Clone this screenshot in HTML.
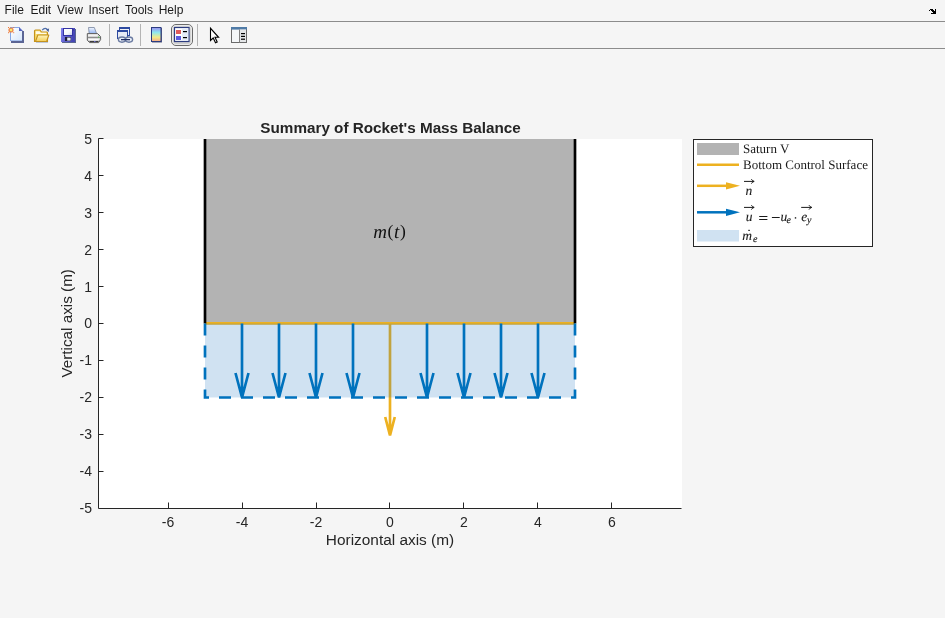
<!DOCTYPE html>
<html><head><meta charset="utf-8">
<style>
html,body{margin:0;padding:0;width:945px;height:618px;overflow:hidden;background:#f5f5f5;}
svg{display:block;will-change:transform;}
.sans{font-family:"Liberation Sans",sans-serif;}
.serif{font-family:"Liberation Serif",serif;text-rendering:geometricPrecision;}
</style></head>
<body>
<svg width="945" height="618" viewBox="0 0 945 618">
<rect x="0" y="0" width="945" height="618" fill="#f5f5f5"/>
<!-- menu -->
<g class="sans" font-size="12" fill="#1a1a1a">
<text x="4.6" y="14">File</text>
<text x="30.5" y="14">Edit</text>
<text x="57" y="14">View</text>
<text x="88.5" y="14">Insert</text>
<text x="125" y="14">Tools</text>
<text x="158.7" y="14">Help</text>
</g>
<rect x="0" y="21" width="945" height="1" fill="#8c8c8c"/>
<rect x="0" y="48" width="945" height="1" fill="#8c8c8c"/>
<!-- toolbar separators -->
<rect x="109" y="24" width="1" height="22" fill="#b4b4b4"/>
<rect x="140" y="24" width="1" height="22" fill="#b4b4b4"/>
<rect x="197" y="24" width="1" height="22" fill="#b4b4b4"/>


<!-- toolbar icons -->
<defs>
<linearGradient id="pg" x1="0" y1="0" x2="1" y2="1"><stop offset="0" stop-color="#ffffff"/><stop offset="1" stop-color="#d6e6fb"/></linearGradient>
<linearGradient id="fold" x1="0" y1="0" x2="0" y2="1"><stop offset="0" stop-color="#fff6c0"/><stop offset="1" stop-color="#f5cf58"/></linearGradient>
<linearGradient id="cb" x1="0" y1="0" x2="0" y2="1"><stop offset="0" stop-color="#9a8cf0"/><stop offset="0.35" stop-color="#8ee8f0"/><stop offset="0.7" stop-color="#f4ec88"/><stop offset="1" stop-color="#f6a88a"/></linearGradient>
<linearGradient id="btn" x1="0" y1="0" x2="0" y2="1"><stop offset="0" stop-color="#dadada"/><stop offset="1" stop-color="#cdcdcd"/></linearGradient>
<linearGradient id="prn" x1="0" y1="0" x2="0" y2="1"><stop offset="0" stop-color="#f4f4f4"/><stop offset="1" stop-color="#9a9a9a"/></linearGradient>
<linearGradient id="flp" x1="0" y1="0" x2="1" y2="0.3"><stop offset="0" stop-color="#8080ee"/><stop offset="1" stop-color="#4646b4"/></linearGradient>
<linearGradient id="lbl" x1="0" y1="0" x2="1" y2="1"><stop offset="0" stop-color="#ffffff"/><stop offset="0.6" stop-color="#f4f6fb"/><stop offset="1" stop-color="#c8d0e8"/></linearGradient>
<linearGradient id="ppr" x1="0" y1="0" x2="0" y2="1"><stop offset="0" stop-color="#f4f8ff"/><stop offset="1" stop-color="#90b2f0"/></linearGradient>
</defs>
<g id="ic-new">
<rect x="11" y="28" width="11" height="13" fill="url(#pg)"/>
<rect x="10" y="27" width="1" height="14" fill="#86a6e4"/>
<rect x="10" y="27" width="9.5" height="1" fill="#86a6e4"/>
<rect x="11" y="40" width="11" height="1" fill="#a9c3f0"/>
<path d="M19,27L23,31H19Z" fill="#5565c0"/>
<rect x="22" y="31" width="2" height="12" fill="#5b6594"/>
<rect x="11" y="41" width="13" height="2" fill="#5b6594"/>
<circle cx="11" cy="30" r="2.6" fill="#f08040" opacity="0.9"/>
<circle cx="11" cy="30" r="1.2" fill="#f6ee70"/>
<g fill="#ec7a3c"><rect x="8" y="27" width="1" height="1"/><rect x="13.2" y="27" width="1" height="1"/><rect x="8" y="32.2" width="1" height="1"/><rect x="13.2" y="32.2" width="1" height="1"/></g>
</g>
<g id="ic-open">
<rect x="36" y="42" width="12" height="1" fill="#bcc6d8"/>
<path d="M34.5,41.5V31Q34.5,30 35.5,30H40L41.5,32H47Q47.5,32 47.5,33V41.5Z" fill="#f6da6c" stroke="#c4921c" stroke-width="1.1"/>
<path d="M35.8,31.2H39.6L40.6,32.8H46.4V34H35.8Z" fill="#fffbe8"/>
<path d="M35.5,41.5L37.8,35H48.8L46.6,41.5Z" fill="url(#fold)" stroke="#c4921c" stroke-width="1.1" stroke-linejoin="round"/>
<path d="M42.2,30.2Q44.6,27.2 47.2,29.2" fill="none" stroke="#4f6ea8" stroke-width="1.2"/>
<path d="M45.9,29.4L49.1,28.4L48.6,31.9Z" fill="#3f5c9c"/>
</g>
<g id="ic-save">
<rect x="62" y="29" width="14" height="14" fill="#5a6690"/>
<rect x="61" y="28" width="14" height="14" fill="url(#flp)"/>
<rect x="63" y="28" width="10" height="8" fill="#3434a4"/>
<rect x="64" y="29" width="8" height="6" fill="url(#lbl)"/>
<rect x="65" y="37" width="6" height="4" fill="#20203c"/>
<rect x="67.2" y="37.6" width="3.4" height="3" fill="#e6eaf6"/>
<rect x="73" y="29.5" width="1" height="1" fill="#30307a"/>
</g>
<g id="ic-print">
<path d="M88.5,27.5H94.3L96.6,33.6H89.2Z" fill="url(#ppr)" stroke="#76849e" stroke-width="0.8"/>
<path d="M87.3,33.6H97.6L100.6,36.6V39.6L98.6,42.6H89.6L87.3,40.2Z" fill="#d4d4d4" stroke="#5e5e5e" stroke-width="1"/>
<rect x="88.2" y="34.4" width="9.5" height="1.6" fill="#f2f2f2"/>
<rect x="88" y="37" width="12" height="1" fill="#8c8c8c"/>
<rect x="88.3" y="38.8" width="10.5" height="1.3" fill="#fbfbfb"/>
<rect x="89.5" y="41" width="9" height="1" fill="#3c3c3c"/>
<rect x="94" y="41" width="1.5" height="1" fill="#6a6ad0"/>
<rect x="98" y="36.5" width="1.2" height="1.2" fill="#52c452"/>
</g>
<g id="ic-link">
<rect x="119.5" y="27.5" width="10" height="8" fill="#f0f2f8" stroke="#2d4aa0" stroke-width="1"/>
<rect x="119" y="27" width="11" height="2" fill="#2d4aa0"/>
<rect x="117.5" y="30.5" width="10" height="8" fill="#e6eaf4" stroke="#2d4aa0" stroke-width="1"/>
<rect x="117" y="30" width="11" height="2" fill="#2d4aa0"/>
<ellipse cx="122" cy="39.6" rx="3.6" ry="2.6" fill="#e8eef8" stroke="#6a7aa0" stroke-width="1.4"/>
<ellipse cx="129" cy="39.6" rx="3.6" ry="2.6" fill="#e8eef8" stroke="#6a7aa0" stroke-width="1.4"/>
<rect x="121" y="39" width="9" height="1.3" fill="#1e2c60"/>
</g>
<g id="ic-cbar">
<rect x="152" y="28" width="10" height="14.5" fill="#5a6080"/>
<rect x="151.5" y="27.5" width="9.5" height="14" fill="url(#cb)" stroke="#2c3c80" stroke-width="1"/>
</g>
<g id="ic-legend">
<rect x="171.5" y="24.5" width="21" height="21" rx="4.5" fill="url(#btn)" stroke="#6a6a6a" stroke-width="1"/>
<rect x="172.5" y="25.5" width="19" height="19" rx="3.5" fill="none" stroke="#ebebeb" stroke-width="1"/>
<rect x="174.5" y="27.5" width="14.5" height="14" fill="#ffffff" stroke="#2c3c80" stroke-width="1.2"/>
<rect x="182" y="28.2" width="6.2" height="12.6" fill="#e6ecf8"/>
<rect x="176" y="30" width="5" height="4" fill="#e05a5a"/>
<rect x="176" y="36" width="5" height="4" fill="#5a5ae0"/>
<rect x="183" y="31" width="4" height="1.2" fill="#000"/>
<rect x="183" y="37" width="4" height="1.2" fill="#000"/>
</g>
<g id="ic-pointer">
<path d="M210.5,28.3V40.5L213.2,38L215.5,42.7L217.2,41.9L215,37.3H218.6Z" fill="#fff" stroke="#000" stroke-width="1.1" stroke-linejoin="miter"/>
</g>
<g id="ic-prop">
<rect x="231.5" y="27.5" width="15" height="15" fill="#f4f6f8" stroke="#6a6a6a" stroke-width="1"/>
<rect x="231" y="27" width="16" height="2.6" fill="#4f7aa6"/>
<rect x="239" y="29.5" width="1" height="13" fill="#808080"/>
<rect x="240" y="29.6" width="6" height="12.4" fill="#e4e6e8"/>
<rect x="241" y="33" width="4" height="1.2" fill="#000"/>
<rect x="241" y="35.8" width="4" height="1.2" fill="#000"/>
<rect x="241" y="38.6" width="4" height="1.2" fill="#000"/>
</g>
<g fill="#000"><rect x="930" y="9" width="1" height="1"/><rect x="931" y="9" width="1" height="1"/><rect x="932" y="9" width="1" height="1"/><rect x="935" y="9" width="1" height="1"/><rect x="929" y="10" width="1" height="1"/><rect x="931" y="10" width="1" height="1"/><rect x="932" y="10" width="1" height="1"/><rect x="933" y="10" width="1" height="1"/><rect x="935" y="10" width="1" height="1"/><rect x="932" y="11" width="1" height="1"/><rect x="933" y="11" width="1" height="1"/><rect x="934" y="11" width="1" height="1"/><rect x="935" y="11" width="1" height="1"/><rect x="933" y="12" width="1" height="1"/><rect x="934" y="12" width="1" height="1"/><rect x="935" y="12" width="1" height="1"/><rect x="931" y="13" width="1" height="1"/><rect x="932" y="13" width="1" height="1"/><rect x="933" y="13" width="1" height="1"/><rect x="934" y="13" width="1" height="1"/><rect x="935" y="13" width="1" height="1"/></g>

<!-- axes background -->
<rect x="99" y="139" width="583" height="369" fill="#ffffff"/>

<!-- plot content -->
<g id="plot">
<rect x="205" y="139" width="370" height="184.5" fill="#b3b3b3"/>
<line x1="205" y1="323.3" x2="575" y2="323.3" stroke="#edb120" stroke-width="2.67"/>
<line x1="205" y1="139" x2="205" y2="323.5" stroke="#000" stroke-width="2.67"/>
<line x1="575" y1="139" x2="575" y2="323.5" stroke="#000" stroke-width="2.67"/>
<path d="M390,323.5V435M385.2,417L390,435.3L394.8,417" stroke="#edb120" stroke-width="2.67" stroke-linejoin="bevel" fill="none"/>
<rect x="205" y="323.5" width="370" height="74" fill="#146ebe" fill-opacity="0.2"/>
<path d="M205,323.5 V397.5 H575 V323.5" fill="none" stroke="#0072bd" stroke-width="2.67" stroke-dasharray="12 10"/>
<g stroke="#0072bd" stroke-width="2.67" fill="none" stroke-linecap="butt" stroke-linejoin="bevel">
<path d="M242,323.5V397.5M235.5,373L242,397.5L248.5,373"/>
<path d="M279,323.5V397.5M272.5,373L279,397.5L285.5,373"/>
<path d="M316,323.5V397.5M309.5,373L316,397.5L322.5,373"/>
<path d="M353,323.5V397.5M346.5,373L353,397.5L359.5,373"/>
<path d="M427,323.5V397.5M420.5,373L427,397.5L433.5,373"/>
<path d="M464,323.5V397.5M457.5,373L464,397.5L470.5,373"/>
<path d="M501,323.5V397.5M494.5,373L501,397.5L507.5,373"/>
<path d="M538,323.5V397.5M531.5,373L538,397.5L544.5,373"/>
</g>
<text class="serif" font-size="19" y="238" fill="#111"><tspan x="373.3" font-style="italic">m</tspan><tspan x="387.6" y="237" font-style="normal" font-size="17.5">(</tspan><tspan x="394.1" y="238" font-style="italic">t</tspan><tspan x="400.1" y="237" font-style="normal" font-size="17.5">)</tspan></text>
</g>

<!-- axes lines -->
<g stroke="#262626" stroke-width="1" fill="none">
<path d="M98.5,138.5V508.5H681.5"/>
<path d="M98.5,138.5h5M98.5,175.5h5M98.5,212.5h5M98.5,249.5h5M98.5,286.5h5M98.5,323.5h5M98.5,360.5h5M98.5,397.5h5M98.5,434.5h5M98.5,471.5h5"/>
<path d="M168.5,508.5v-6M242.5,508.5v-6M316.5,508.5v-6M389.5,508.5v-6M463.5,508.5v-6M537.5,508.5v-6M611.5,508.5v-6"/>
</g>
<g class="sans" font-size="14" fill="#262626" text-anchor="end">
<text x="92" y="144">5</text>
<text x="92" y="181">4</text>
<text x="92" y="218">3</text>
<text x="92" y="255">2</text>
<text x="92" y="292">1</text>
<text x="92" y="328">0</text>
<text x="92" y="365">-1</text>
<text x="92" y="402">-2</text>
<text x="92" y="439">-3</text>
<text x="92" y="476">-4</text>
<text x="92" y="513">-5</text>
</g>
<g class="sans" font-size="14" fill="#262626" text-anchor="middle">
<text x="168" y="527">-6</text>
<text x="242" y="527">-4</text>
<text x="316" y="527">-2</text>
<text x="390" y="527">0</text>
<text x="464" y="527">2</text>
<text x="538" y="527">4</text>
<text x="612" y="527">6</text>
</g>
<text class="sans" font-size="15.4" fill="#262626" text-anchor="middle" x="390" y="545">Horizontal axis (m)</text>
<text class="sans" font-size="15.25" fill="#262626" text-anchor="middle" transform="translate(71.5,323.3) rotate(-90)">Vertical axis (m)</text>
<text class="sans" font-size="15.25" font-weight="bold" fill="#242424" text-anchor="middle" x="390.6" y="133">Summary of Rocket's Mass Balance</text>

<!-- legend -->
<rect x="693.5" y="139.5" width="179" height="107" fill="#fff" stroke="#262626" stroke-width="1"/>
<rect x="697" y="143" width="42" height="12" fill="#b3b3b3"/>
<line x1="697" y1="164.7" x2="739" y2="164.7" stroke="#edb120" stroke-width="2.5"/>
<line x1="697" y1="185.8" x2="728" y2="185.8" stroke="#edb120" stroke-width="2.5"/>
<path d="M726,182.3L740,185.8L726,189.4Z" fill="#edb120"/>
<line x1="697" y1="212.3" x2="728" y2="212.3" stroke="#0072bd" stroke-width="2.5"/>
<path d="M726,208.8L740,212.3L726,215.9Z" fill="#0072bd"/>
<rect x="697" y="230" width="42" height="11.5" fill="#d0e2f2"/>
<g class="serif" font-size="13" fill="#1a1a1a">
<text x="743" y="153">Saturn V</text>
<text x="743" y="169">Bottom Control Surface</text>
</g>

<g class="serif" fill="#1a1a1a" font-style="italic" stroke="#1a1a1a" stroke-width="0.12">
<text x="745.6" y="194.8" font-size="13.5">n</text>
<text x="745.8" y="220.8" font-size="13.5">u</text>
<text x="780.4" y="220.8" font-size="13.5">u</text>
<text x="786.6" y="222.8" font-size="10">e</text>
<text x="801.3" y="220.8" font-size="13.5">e</text>
<text x="807" y="222.8" font-size="10">y</text>
<text x="742.3" y="239.9" font-size="13.5">m</text>
<text x="753" y="241.8" font-size="10">e</text>
</g>
<g fill="#1a1a1a">
<rect x="759.2" y="216" width="8.2" height="1"/>
<rect x="759.2" y="219" width="8.2" height="1"/>
<rect x="771.9" y="217" width="7.8" height="1"/>
<rect x="794.8" y="217.2" width="1.4" height="1.4"/>
<rect x="748.3" y="229.8" width="1.5" height="1.2"/>
</g>
<g stroke="#1a1a1a" stroke-width="1" fill="none">
<path d="M744,181.4H753.8M751.4,179.2Q752.4,181 754.2,181.4Q752.4,181.8 751.4,183.6"/>
<path d="M744,207.4H753.8M751.4,205.2Q752.4,207 754.2,207.4Q752.4,207.8 751.4,209.6"/>
<path d="M801.2,207.4H811.4M809,205.2Q810,207 811.8,207.4Q810,207.8 809,209.6"/>
</g>
</svg>
</body></html>
